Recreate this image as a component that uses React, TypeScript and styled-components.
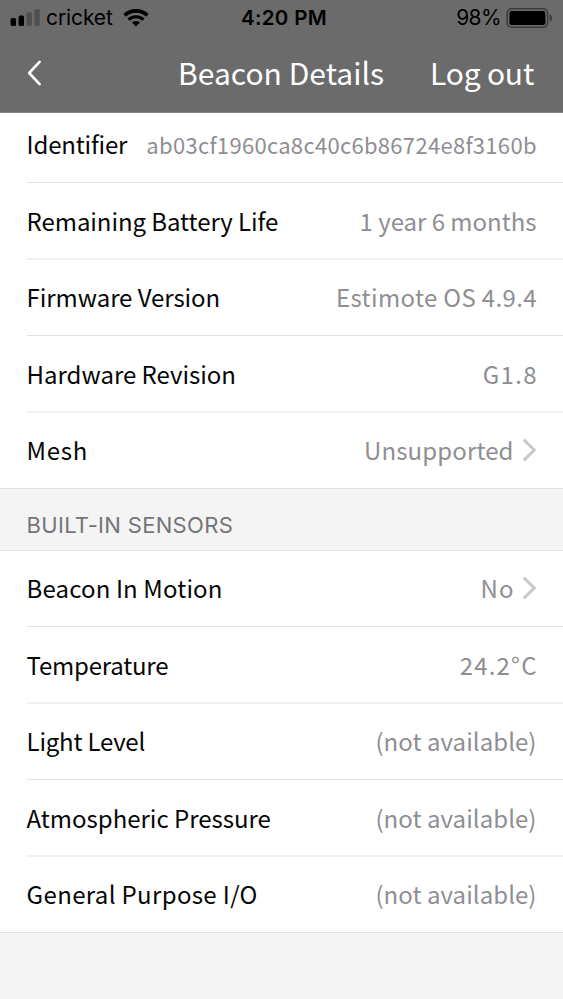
import React from "react";
import styled, { createGlobalStyle } from "styled-components";

const GlobalStyle = createGlobalStyle`
  *, *::before, *::after { box-sizing: border-box; }
  html, body { margin: 0; background: #f4f4f4; }
`;

const TEXT_FONT = '"Noto Sans CJK SC", "Open Sans", sans-serif';
const SYSTEM_FONT = 'Inter, "Liberation Sans", sans-serif';

const Screen = styled.main`
  width: 563px;
  height: 999px;
  overflow: hidden;
  display: flex;
  flex-direction: column;
  background: #f4f4f4;
  font-family: ${TEXT_FONT};
  white-space: pre;
`;

const Header = styled.header`
  flex: none;
  height: 113px;
  background: #6b6b6b;
  border-bottom: 1px solid #858585;
`;

const StatusBar = styled.div`
  display: grid;
  grid-template-columns: 241px 1fr auto;
  align-items: center;
  height: 36px;
  padding: 0 10px 0 0;
  font-family: ${SYSTEM_FONT};
  font-size: 21px;
  line-height: 36px;
  color: #000;
`;

const StatusGroup = styled.div`
  display: flex;
  align-items: center;
`;

const SignalGroup = styled(StatusGroup)`
  padding-left: 10px;
`;

const Carrier = styled.span`
  margin: 0 10px 0 6px;
  letter-spacing: -0.1px;
`;

const Clock = styled.time`
  font-size: 20.5px;
  font-weight: 600;
  letter-spacing: 0.3px;
`;

const Charge = styled.span`
  margin-right: 5px;
  letter-spacing: -0.6px;
`;

const NavBar = styled.nav`
  display: grid;
  grid-template-columns: 178px 1fr auto;
  align-items: center;
  height: 74px;
  padding: 0 29px 0 0;
  color: #fff;
  font-size: 30px;
  line-height: 44px;
`;

const BackButton = styled.button`
  display: flex;
  padding: 0 0 0 26px;
  border: 0;
  background: none;
`;

const Title = styled.h1`
  margin: -3px 0 0;
  font-size: inherit;
  font-weight: 400;
  letter-spacing: 0.02px;
`;

const LogOut = styled.button`
  margin: -3px 0 0;
  padding: 0;
  border: 0;
  background: none;
  color: inherit;
  font: inherit;
  letter-spacing: -0.2px;
`;

const List = styled.section`
  flex: none;
  display: flex;
  flex-direction: column;
  background: #fff;
`;

type Rule = "crisp" | "soft" | "full";

const Row = styled.div<{ $height: number; $lift: number; $rule: Rule }>`
  display: flex;
  justify-content: space-between;
  align-items: flex-start;
  height: ${(p) => p.$height}px;
  padding: ${(p) => 19 - p.$lift}px 27px 0 ${(p) => (p.$rule === "full" ? 27 : 0)}px;
  margin-left: ${(p) => (p.$rule === "full" ? 0 : 27)}px;
  border-bottom: ${(p) => (p.$rule === "soft" ? "2px solid #f0f0f0" : "1px solid #e2e2e3")};
  font-size: 24px;
  line-height: 36px;
`;

const Label = styled.span<{ $track: number }>`
  margin-left: -0.4px;
  color: #060606;
  letter-spacing: ${(p) => p.$track}px;
`;

const Detail = styled.span`
  display: flex;
  align-items: center;
`;

const Value = styled.span<{ $track: number; $size: number }>`
  color: #8e8e93;
  font-size: ${(p) => p.$size}px;
  letter-spacing: ${(p) => p.$track}px;
  margin-right: ${(p) => -p.$track - 0.5}px;
`;

const SectionHeader = styled.h2`
  flex: none;
  height: 62px;
  margin: 0;
  padding: 18px 26.5px 0;
  border-bottom: 1px solid #e4e4e6;
  color: #747479;
  font-family: ${SYSTEM_FONT};
  font-size: 22px;
  font-weight: 400;
  line-height: 36px;
  letter-spacing: 0.32px;
`;

const SignalIcon = () => (
  <svg width="30" height="18" viewBox="0 0 30 18">
    <rect x="0.6" y="9" width="5.4" height="8" rx="1.6" />
    <rect x="8.6" y="6.6" width="5.4" height="10.4" rx="1.6" />
    <rect x="16.5" y="3.2" width="5.4" height="13.8" rx="1.6" fill="#505050" />
    <rect x="24.4" y="0" width="5.4" height="17" rx="1.6" fill="#505050" />
  </svg>
);

const WifiIcon = () => (
  <svg width="26" height="18" viewBox="0 0 26 18" fill="none" stroke="#000">
    <path d="M1.6 6.4C8 .4 18 .4 24.4 6.4" strokeWidth="3.6" />
    <path d="M5.5 10.7C9.8 6.8 16.2 6.8 20.5 10.7" strokeWidth="3" />
    <path d="M13 17.6L8.9 13.6C11.3 11.6 14.7 11.6 17.1 13.6Z" fill="#000" stroke="none" />
  </svg>
);

const BatteryIcon = () => (
  <svg width="47" height="20" viewBox="0 0 47 20">
    <rect x="1.2" y="0.8" width="40.4" height="18.4" rx="4.2" fill="none" stroke="#3c3c3c" strokeWidth="1.5" />
    <rect x="3.4" y="3" width="36" height="14" rx="2" />
    <path d="M43.6 6.4C47.1 7.4 47.1 12.6 43.6 13.6Z" fill="#3c3c3c" />
  </svg>
);

const BackIcon = () => (
  <svg width="18" height="28" viewBox="0 0 18 28" fill="none" stroke="#fff" strokeWidth="2.6" strokeLinecap="round" strokeLinejoin="round">
    <path d="M13.6 2.8L3.2 14L13.6 25.2" />
  </svg>
);

const ChevronShape = styled.svg`
  margin: 0 -1px 0 9px;
`;

const Chevron = () => (
  <ChevronShape width="15" height="24" viewBox="0 0 15 24" fill="none" stroke="#c7c7cc" strokeWidth="3">
    <path d="M1.8 1.6L12.2 12L1.8 22.4" />
  </ChevronShape>
);

interface Item {
  label: string;
  track: number;
  value: string;
  valueTrack: number;
  height: number;
  rule: Rule;
  size?: number;
  lift?: number;
  link?: boolean;
}

const beacon: Item[] = [
  { label: "Identifier", track: -0.19, value: "ab03cf1960ca8c40c6b86724e8f3160b", valueTrack: 0.3, size: 22, height: 70, lift: 6, rule: "crisp" },
  { label: "Remaining Battery Life", track: -0.07, value: "1 year 6 months", valueTrack: -0.02, height: 77, lift: -1, rule: "soft" },
  { label: "Firmware Version", track: -0.06, value: "Estimote OS 4.9.4", valueTrack: 0.34, height: 76, rule: "crisp" },
  { label: "Hardware Revision", track: -0.02, value: "G1.8", valueTrack: 1.3, height: 77, lift: -1, rule: "soft" },
  { label: "Mesh", track: 0.7, value: "Unsupported", valueTrack: 0.12, height: 76, rule: "full", link: true },
];

const sensors: Item[] = [
  { label: "Beacon In Motion", track: 0.13, value: "No", valueTrack: 1, height: 76, rule: "crisp", link: true },
  { label: "Temperature", track: -0.22, value: "24.2°C", valueTrack: 1.2, height: 77, lift: -1, rule: "soft" },
  { label: "Light Level", track: -0.22, value: "(not available)", valueTrack: 0.06, height: 76, rule: "crisp" },
  { label: "Atmospheric Pressure", track: -0.01, value: "(not available)", valueTrack: 0.06, height: 77, lift: -1, rule: "soft" },
  { label: "General Purpose I/O", track: 0.35, value: "(not available)", valueTrack: 0.06, height: 76, rule: "full" },
];

const Rows = ({ items }: { items: Item[] }) => (
  <List>
    {items.map((item) => (
      <Row key={item.label} $height={item.height} $lift={item.lift ?? 0} $rule={item.rule}>
        <Label $track={item.track}>{item.label}</Label>
        <Detail>
          <Value $track={item.valueTrack} $size={item.size ?? 24}>{item.value}</Value>
          {item.link && <Chevron />}
        </Detail>
      </Row>
    ))}
  </List>
);

export default function App() {
  return (
    <>
      <GlobalStyle />
      <Screen>
        <Header>
          <StatusBar>
            <SignalGroup>
              <SignalIcon />
              <Carrier>cricket</Carrier>
              <WifiIcon />
            </SignalGroup>
            <Clock>4:20 PM</Clock>
            <StatusGroup>
              <Charge>98%</Charge>
              <BatteryIcon />
            </StatusGroup>
          </StatusBar>
          <NavBar>
            <BackButton aria-label="Back"><BackIcon /></BackButton>
            <Title>Beacon Details</Title>
            <LogOut>Log out</LogOut>
          </NavBar>
        </Header>
        <Rows items={beacon} />
        <SectionHeader>BUILT-IN SENSORS</SectionHeader>
        <Rows items={sensors} />
      </Screen>
    </>
  );
}
